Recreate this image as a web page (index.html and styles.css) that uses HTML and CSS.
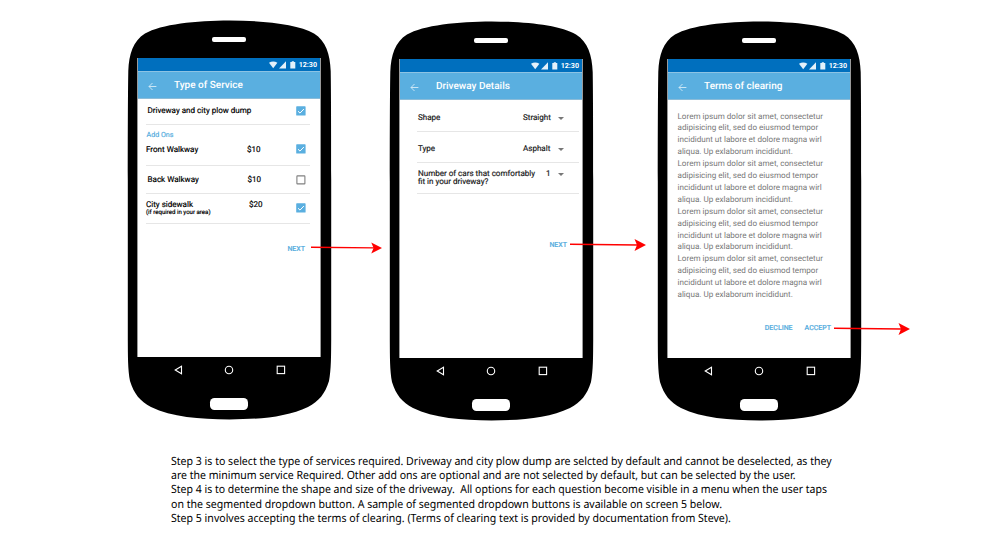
FILE: index.html
```html
<!DOCTYPE html>
<html lang="en">
<head>
<meta charset="utf-8">
<title>Service flow</title>
<link rel="stylesheet" href="styles.css">
</head>
<body>
<svg class="defs" width="0" height="0" aria-hidden="true">
  <symbol id="body" viewBox="0 0 205 401">
    <path d="M102.5 .4C69 .6 34 4 18 13.5C6 21 2 34 1.3 51C.9 75 .8 110 .8 160V320C.9 335 .8 350 3 361C7 374 13 381 24 387C45 397 72 399.4 102.5 399.4C133 399.4 160 397 181 387C192 381 198 374 202 361C204.200 350 204.100 335 204.200 320V160C204.200 110 204.100 75 203.700 51C203 34 199 21 187 13.500C171 4 136 .6 102.500 .4Z"/>
  </symbol>
  <symbol id="status" viewBox="0 0 27 8">
    <path d="M0 1.700Q4.200-.8 8.400 1.700L4.200 7.200Z"/><path d="M10 7.400L17 .3V7.400Z"/><path d="M21.300 1.100H22.800V.3H24.900V1.100H26.300V7.500H21.300Z"/>
  </symbol>
  <symbol id="back" viewBox="0 0 9 9"><path d="M8.400 4.500H1M4.500 1L1 4.500L4.500 8" fill="none" stroke="currentColor" stroke-width=".9"/></symbol>
  <symbol id="check" viewBox="0 0 10 10"><rect x=".2" y=".2" width="9.400" height="9.400" rx=".7" fill="#5aafe0"/><path d="M2 5.200L4 7.100L7.900 3" fill="none" stroke="#fff" stroke-width="1"/></symbol>
  <symbol id="empty" viewBox="0 0 10 10"><rect x=".9" y=".9" width="8" height="8" rx=".5" fill="#fff" stroke="#808080" stroke-width="1.100"/></symbol>
  <symbol id="nav" viewBox="0 0 112 10"><g fill="none" stroke="#fff" stroke-width="1.100"><path d="M7.500 1.200V8.800L1.200 5Z"/><circle cx="55" cy="5" r="3.700"/><rect x="103.200" y="1.200" width="7.400" height="7.400"/></g></symbol>
  <symbol id="arrow" viewBox="0 0 76 14"><path d="M0 6.200L68 6.900" stroke="#f00" stroke-width="1.500"/><path d="M64.500 1L76 7L64.500 13L67 7Z" fill="#f00"/></symbol>
</svg>
<main class="board">
  <section class="phone">
    <svg class="shell"><use href="#body"/></svg>
    <div class="speaker"></div>
    <div class="screen">
      <div class="status"><svg><use href="#status"/></svg><span>12:30</span></div>
      <header class="appbar"><svg><use href="#back"/></svg><h1>Type of Service</h1></header>
      <div class="list services">
        <div class="row first"><span>Driveway and city plow dump</span><svg class="box"><use href="#check"/></svg></div>
        <div class="group">Add Ons</div>
        <div class="row front"><span>Front Walkway</span><span class="price">$10</span><svg class="box"><use href="#check"/></svg></div>
        <div class="row rear"><span>Back Walkway</span><span class="price">$10</span><svg class="box"><use href="#empty"/></svg></div>
        <div class="row city"><div class="label">City sidewalk<small>(if required in your area)</small></div><span class="price">$20</span><svg class="box"><use href="#check"/></svg></div>
      </div>
      <div class="actions service-actions"><span>NEXT</span></div>
    </div>
    <svg class="nav"><use href="#nav"/></svg>
    <div class="home"></div>
    <svg class="arrow a1"><use href="#arrow"/></svg>
  </section>
  <section class="phone lower">
    <svg class="shell"><use href="#body"/></svg>
    <div class="speaker"></div>
    <div class="screen">
      <div class="status"><svg><use href="#status"/></svg><span>12:30</span></div>
      <header class="appbar"><svg><use href="#back"/></svg><h1>Driveway Details</h1></header>
      <div class="list details">
        <div class="row shape"><span>Shape</span><span class="value">Straight</span><i class="caret"></i></div>
        <div class="row type"><span>Type</span><span class="value">Asphalt</span><i class="caret"></i></div>
        <div class="row cars"><div class="label">Number of cars that comfortably<br>fit in your driveway?</div><span class="value">1</span><i class="caret"></i></div>
      </div>
      <div class="actions detail-actions"><span>NEXT</span></div>
    </div>
    <svg class="nav"><use href="#nav"/></svg>
    <div class="home"></div>
    <svg class="arrow a2"><use href="#arrow"/></svg>
  </section>
  <section class="phone lower last">
    <svg class="shell"><use href="#body"/></svg>
    <div class="speaker"></div>
    <div class="screen">
      <div class="status"><svg><use href="#status"/></svg><span>12:30</span></div>
      <header class="appbar"><svg><use href="#back"/></svg><h1>Terms of clearing</h1></header>
      <div class="terms">
        <p>Lorem ipsum dolor sit amet, consectetur<br>adipisicing elit, sed do eiusmod tempor<br>incididunt ut labore et dolore magna wirl<br>aliqua. Up exlaborum incididunt.</p>
        <p>Lorem ipsum dolor sit amet, consectetur<br>adipisicing elit, sed do eiusmod tempor<br>incididunt ut labore et dolore magna wirl<br>aliqua. Up exlaborum incididunt.</p>
        <p>Lorem ipsum dolor sit amet, consectetur<br>adipisicing elit, sed do eiusmod tempor<br>incididunt ut labore et dolore magna wirl<br>aliqua. Up exlaborum incididunt.</p>
        <p>Lorem ipsum dolor sit amet, consectetur<br>adipisicing elit, sed do eiusmod tempor<br>incididunt ut labore et dolore magna wirl<br>aliqua. Up exlaborum incididunt.</p>
      </div>
      <div class="actions term-actions"><span>DECLINE</span><span>ACCEPT</span></div>
    </div>
    <svg class="nav"><use href="#nav"/></svg>
    <div class="home"></div>
    <svg class="arrow a3"><use href="#arrow"/></svg>
  </section>
</main>
<div class="notes">
  <p>Step 3 is to select the type of services required. Driveway and city plow dump are selcted by default and cannot be deselected, as they</p>
  <p class="n2">are the minimum service Required. Other add ons are optional and are not selected by default, but can be selected by the user.</p>
  <p class="n3">Step 4 is to determine the shape and size of the driveway.&nbsp; All options for each question become visible in a menu when the user taps</p>
  <p>on the segmented dropdown button. A sample of segmented dropdown buttons is available on screen 5 below.</p>
  <p>Step 5 involves accepting the terms of clearing. (Terms of clearing text is provided by documentation from Steve).</p>
</div>
</body>
</html>
```
FILE: styles.css
```css
* { box-sizing: border-box; }
body { margin: 0; width: 1000px; height: 552px; overflow: hidden; background: #fff; font-family: Roboto, sans-serif; color: #000; text-rendering: geometricPrecision; }
.defs { position: absolute; }
.board { display: flex; gap: 57px; padding: 20px 0 0 127px; height: 455px; }
.phone { position: relative; width: 205px; height: 401px; display: flex; flex-direction: column; align-items: center; flex: none; }
.lower { margin-top: 1px; }
.last { margin-left: 6px; }
.shell { position: absolute; left: 0; top: 0; width: 205px; height: 401px; z-index: -1; }
.speaker { width: 34px; height: 5px; border-radius: 2px; background: #fff; margin: 17px 2px 0 0; flex: none; }
.screen { width: 184px; height: 299px; margin-top: 16px; margin-left: -1px; background: #fff; flex: none; border: solid #999; border-width: 0 .5px; display: flex; flex-direction: column; }
.status { height: 13px; background: #006fbe; display: flex; align-items: center; justify-content: flex-end; padding-right: 3px; color: #fff; font-size: 7.100px; font-weight: 700; gap: 3px; flex: none; }
.status svg { width: 27px; height: 8px; fill: #e4f1fa; flex: none; }
.appbar { height: 28px; background: #5aafe0; color: #fff; display: flex; align-items: center; padding: 2px 0 0 10px; gap: 17px; flex: none; border-top: 1px solid #8cc3e4; border-bottom: 1px solid #8cbcd8; }
.appbar svg { width: 9px; height: 9px; opacity: .75; }
h1 { margin: 0; font-size: 10px; line-height: 12px; font-weight: 500; }
.list { margin: 0 10px 0 8px; font-size: 8.050px; line-height: 8.500px; font-weight: 400; -webkit-text-stroke: .18px currentColor; }
.row { display: grid; grid-template-columns: 101px 1fr 10px; align-items: center; border-bottom: 1px solid #e6e6e6; white-space: nowrap; }
.services .row { padding-right: 4px; }
.box { width: 10px; height: 10px; grid-column: 3; position: relative; top: -1px; }
.rear .box { top: 0; }
.first { height: 26px; }
.first span { grid-column: 1 / 3; padding-left: 1.500px; }
.group { color: #5aafe0; font-size: 7.100px; line-height: 9px; padding: 5px 0 0 .5px; height: 16px; }
.front { height: 25px; padding-bottom: 6px; }
.front .box { top: -1.500px; }
.rear { height: 28px; padding: 1px 0 0 1.500px; grid-template-columns: 100px 1fr 10px; }
.city { height: 30px; padding-top: 1px; }
.city .price { padding: 0 0 8px 2px; }
.label small { display: block; font-size: 6.100px; line-height: 8px; }
.actions { color: #5aafe0; font-size: 7px; line-height: 9px; font-weight: 500; display: flex; justify-content: flex-end; gap: 12px; -webkit-text-stroke: .15px currentColor; }
.service-actions { padding: 20.500px 15px 0 0; }
.details { color: #222; margin: 0 3px 0 17px; }
.details .row { grid-template-columns: minmax(0, 1fr) 28.500px 6px; column-gap: 6.500px; padding-left: 1px; padding-right: 15px; }
.shape { height: 32px; padding-top: 5px; }
.type { height: 31px; padding-top: 4px; }
.cars { height: 31px; }
.cars .value, .cars .caret { margin-bottom: 8px; }
.cars .value { text-align: right; padding-right: 1px; }
.caret { width: 0; height: 0; border: 3px solid transparent; border-top-color: #777; border-bottom: 0; }
.detail-actions { padding: 46.500px 15px 0 0; }
.terms { padding: 10.500px 0 0 9.500px; color: #777; font-size: 8.100px; line-height: 11.900px; }
p { margin: 0; white-space: nowrap; }
.term-actions { padding: 23px 19px 0 0; }
.nav { width: 112px; height: 10px; margin-top: 7.500px; margin-left: 1px; flex: none; }
.home { width: 38px; height: 12.500px; border-radius: 4.500px; background: #fff; margin: 23px 2px 0 0; flex: none; }
.arrow { position: absolute; width: 76px; height: 14px; }
.a1 { left: 184px; top: 221px; width: 71px; }
.a2 { left: 181px; top: 217px; }
.a3 { left: 177px; top: 301px; }
.notes { padding-left: 171px; font-family: "Noto Sans", sans-serif; font-size: 11.300px; line-height: 14.200px; color: #000; }
.notes p { width: max-content; transform: scaleX(.9355); transform-origin: 0 0; }
.notes .n2, .notes .n3 { transform: scaleX(.931); }
```
